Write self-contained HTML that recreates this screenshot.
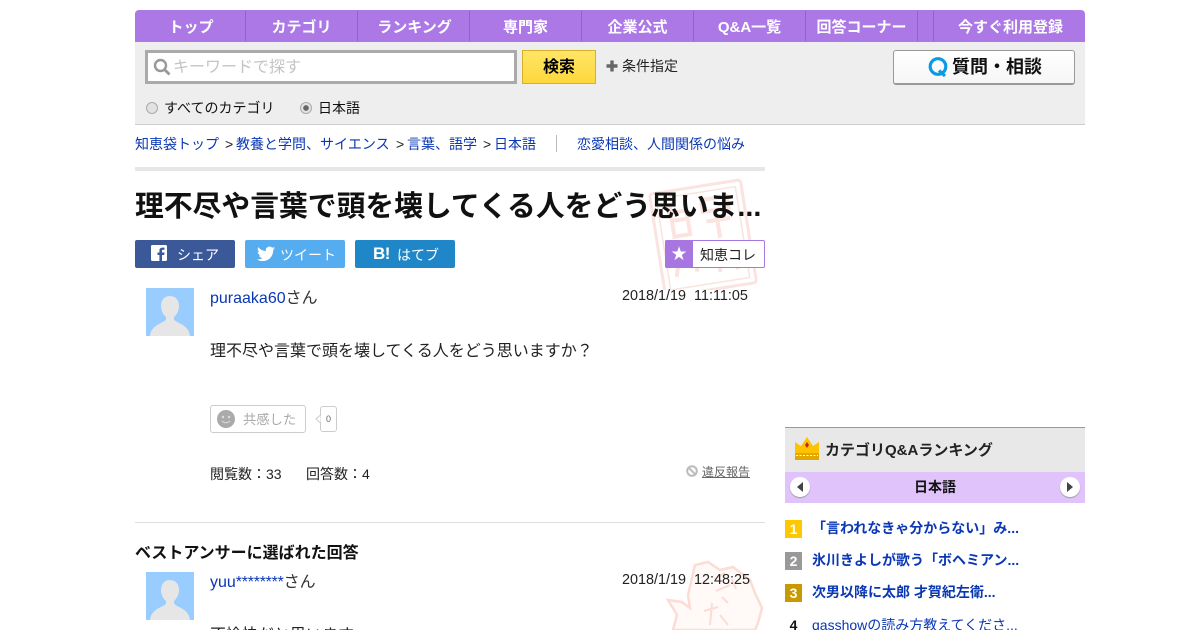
<!DOCTYPE html>
<html lang="ja"><head><meta charset="utf-8"><title>理不尽や言葉で頭を壊してくる人をどう思いますか？</title>
<style>
html,body{margin:0;padding:0;background:#fff;width:1200px;height:630px;overflow:hidden}
body{position:relative;font-family:"Liberation Sans","WenQuanYi Zen Hei","Noto Sans CJK JP",sans-serif;color:#111}
.a{position:absolute;white-space:nowrap}
a,.l{color:#0a37b4;text-decoration:none}
.nav{position:absolute;top:11px;height:32px;line-height:33px;text-align:center;color:#fff;font-weight:bold;font-size:15px}
.sep{position:absolute;top:11px;width:1px;height:30px;background:#8f63c9}
.btn{position:absolute;top:240px;width:100px;height:28px;border-radius:2px;color:#fff;font-size:14px;line-height:29px}
</style></head><body>
<div class="a" style="left:135px;top:10px;width:950px;height:32px;background:#ab78e6;border-radius:4px 4px 0 0"></div>
<div class="nav" style="left:136px;width:110px">トップ</div>
<div class="nav" style="left:246px;width:111px">カテゴリ</div>
<div class="nav" style="left:359px;width:111px">ランキング</div>
<div class="nav" style="left:470px;width:111px">専門家</div>
<div class="nav" style="left:582px;width:111px">企業公式</div>
<div class="nav" style="left:694px;width:111px">Q&amp;A一覧</div>
<div class="nav" style="left:806px;width:111px">回答コーナー</div>
<div class="nav" style="left:935px;width:151px">今すぐ利用登録</div>
<div class="sep" style="left:245px"></div><div class="sep" style="left:357px"></div><div class="sep" style="left:469px"></div><div class="sep" style="left:581px"></div><div class="sep" style="left:693px"></div><div class="sep" style="left:805px"></div><div class="sep" style="left:917px"></div><div class="sep" style="left:933px"></div>

<div class="a" style="left:135px;top:42px;width:950px;height:82px;background:#eee;border-bottom:1px solid #ccc"></div>
<div class="a" style="left:145px;top:50px;width:366px;height:28px;border:3px solid #aaa;background:#fff"></div>
<div class="a" style="left:173px;top:56px;font-size:16px;line-height:24px;color:#c4c4c4">キーワードで探す</div>
<svg class="a" style="left:153px;top:58px" width="18" height="18" viewBox="0 0 18 18"><circle cx="7.5" cy="7.5" r="5.5" fill="none" stroke="#999" stroke-width="2.4"/><path d="M11.5 11.5L16.5 16.5" stroke="#999" stroke-width="2.8"/></svg>
<div class="a" style="left:522px;top:50px;width:72px;height:32px;border:1px solid #d6b02c;background:linear-gradient(#ffe566,#fed73c);text-align:center;font-weight:bold;font-size:16px;line-height:33px;color:#000">検索</div>
<svg class="a" style="left:606px;top:60px" width="12" height="12"><path d="M6 0.5V11.500M0.5 6H11.500" stroke="#666" stroke-width="3.4"/></svg>
<div class="a" style="left:622px;top:56px;font-size:14px;line-height:20px;color:#222">条件指定</div>
<div class="a" style="left:893px;top:50px;width:180px;height:32px;border:1px solid #999;border-bottom:2px solid #999;border-radius:3px;background:linear-gradient(#fff,#f6f6f6)"></div>
<svg class="a" style="left:927px;top:56px" width="22" height="22" viewBox="0 0 22 22"><circle cx="11" cy="10.5" r="7.8" fill="none" stroke="#0a9be6" stroke-width="3.2"/><path d="M12 14.5L18 20" stroke="#0a9be6" stroke-width="3.2"/></svg>
<div class="a" style="left:952px;top:55px;font-size:18px;font-weight:bold;line-height:24px;color:#111">質問・相談</div>

<div class="a" style="left:146px;top:102px;width:10px;height:10px;border:1px solid #aaa;border-radius:50%;background:#e2e2e2"></div>
<div class="a" style="left:164px;top:98px;font-size:14px;line-height:21px">すべてのカテゴリ</div>
<div class="a" style="left:300px;top:102px;width:10px;height:10px;border:1px solid #aaa;border-radius:50%;background:radial-gradient(circle,#666 0,#666 2.4px,#e4e4e4 3.2px)"></div>
<div class="a" style="left:318px;top:98px;font-size:14px;line-height:21px">日本語</div>

<div class="a" style="left:135px;top:134px;font-size:14px;line-height:20px;color:#222"><a class="l">知恵袋トップ</a></div>
<div class="a" style="left:225px;top:134px;font-size:14px;line-height:20px;color:#222">&gt;</div>
<div class="a l" style="left:236px;top:134px;font-size:14px;line-height:20px">教養と学問、サイエンス</div>
<div class="a" style="left:396px;top:134px;font-size:14px;line-height:20px;color:#222">&gt;</div>
<div class="a l" style="left:407px;top:134px;font-size:14px;line-height:20px">言葉、語学</div>
<div class="a" style="left:483px;top:134px;font-size:14px;line-height:20px;color:#222">&gt;</div>
<div class="a l" style="left:494px;top:134px;font-size:14px;line-height:20px">日本語</div>
<div class="a" style="left:556px;top:135px;width:1px;height:17px;background:#bbb"></div>
<div class="a l" style="left:577px;top:134px;font-size:14px;line-height:20px">恋愛相談、人間関係の悩み</div>
<div class="a" style="left:135px;top:167px;width:630px;height:4px;background:#e6e6e6"></div>

<svg class="a" style="left:645px;top:178px" width="120" height="112" viewBox="0 0 120 112">
<g transform="rotate(-9 60 60)" fill="none" stroke="#fbe3df" stroke-width="3"><rect x="12" y="8" width="92" height="104" rx="3"/><rect x="18" y="14" width="80" height="92" stroke-width="1.5"/><path stroke-width="4" d="M26 30h22M30 22v32h16V22M30 38h16M62 22h26v12H62zM64 44h24M75 34v28M26 66h24l-3 26M34 66l-8 28M62 70h26M70 70v26M82 70l6 26"/></g></svg>

<div class="a" style="left:135px;top:186px;font-size:28.8px;font-weight:bold;line-height:42px;color:#111">理不尽や言葉で頭を壊してくる人をどう思いま...</div>

<div class="btn" style="left:135px;background:#3b5998"><svg class="a" style="left:16px;top:5px" width="16" height="16"><rect width="16" height="16" rx="1.5" fill="#fff"/><path d="M11 16V10h2.200l.4-2.500H11V6c0-.8.3-1.200 1.200-1.200h1.300V2.600h-2C9.300 2.600 8.400 3.800 8.400 5.700v1.800H6.500V10h1.900v6z" fill="#3b5998"/></svg><span class="a" style="left:42px;top:1px">シェア</span></div>
<div class="btn" style="left:245px;background:#55acee"><svg class="a" style="left:12px;top:6px" width="18" height="16" viewBox="0 0 24 20"><path fill="#fff" d="M24 2.400a10 10 0 0 1-2.800.8 5 5 0 0 0 2.200-2.700 10 10 0 0 1-3.100 1.200 4.900 4.900 0 0 0-8.400 4.500A14 14 0 0 1 1.700.9a4.900 4.900 0 0 0 1.500 6.600 4.900 4.900 0 0 1-2.200-.6c0 2.400 1.700 4.400 3.900 4.900a5 5 0 0 1-2.200.1 4.900 4.900 0 0 0 4.600 3.400A10 10 0 0 1 0 17.300 14 14 0 0 0 7.500 19.500c9.100 0 14.300-7.700 14-14.600A10 10 0 0 0 24 2.400z"/></svg><span class="a" style="left:35px;top:1px">ツイート</span></div>
<div class="btn" style="left:355px;background:#1f87c8"><span class="a" style="left:18px;top:-1px;font-weight:bold;font-size:17px;letter-spacing:-.5px;font-family:'Liberation Sans',sans-serif">B!</span><span class="a" style="left:42px;top:1px">はてブ</span></div>

<div class="a" style="left:665px;top:240px;width:98px;height:26px;border:1px solid #a876e0;border-radius:2px;background:#fff"></div>
<div class="a" style="left:665px;top:240px;width:28px;height:28px;background:#a876e0;border-radius:2px 0 0 2px;color:#fff;text-align:center;font-size:19px;line-height:28px;font-family:'DejaVu Sans',sans-serif">★</div>
<div class="a" style="left:700px;top:245px;font-size:14px;line-height:20px;color:#222">知恵コレ</div>

<svg class="a" style="left:146px;top:288px" width="48" height="48" viewBox="0 0 48 48"><rect width="48" height="48" fill="#99ccff"/><path d="M24 8c-6 0-9 4.500-9 10 0 5 2.500 9 5 11v2.500C18 35 5 36.500 4 48h40c-1-11.500-14-13-16-16.500V29c2.500-2 5-6 5-11 0-5.500-3-10-9-10z" fill="#e6e6e6"/></svg>
<div class="a" style="left:210px;top:288px;font-size:16px;line-height:21px;color:#333"><a class="l">puraaka60</a>さん</div>
<div class="a" style="left:622px;top:287px;font-size:14.4px;line-height:18px;color:#222">2018/1/19&nbsp;&nbsp;11:11:05</div>
<div class="a" style="left:210px;top:341px;font-size:16px;line-height:22px;color:#222">理不尽や言葉で頭を壊してくる人をどう思いますか？</div>

<div class="a" style="left:210px;top:405px;width:94px;height:26px;border:1px solid #ccc;border-radius:3px"></div>
<svg class="a" style="left:217px;top:410px" width="18" height="18"><circle cx="9" cy="9" r="9" fill="#aaa"/><circle cx="6" cy="7" r="1.200" fill="#ddd"/><circle cx="12" cy="7" r="1.200" fill="#ddd"/><path d="M5 11q4 3.500 8 0" stroke="#ddd" fill="none"/></svg>
<div class="a" style="left:243px;top:410px;font-size:13.3px;line-height:20px;color:#aaa">共感した</div>
<div class="a" style="left:320px;top:406px;width:15px;height:24px;border:1px solid #ccc;border-radius:3px;text-align:center;font-size:9px;line-height:25px;color:#666">0</div>
<svg class="a" style="left:315px;top:414px" width="6" height="10"><path d="M5.500 1L1 5l4.500 4" fill="#fff" stroke="#ccc"/></svg>

<div class="a" style="left:210px;top:464px;font-size:14px;line-height:20px;color:#222">閲覧数：33</div>
<div class="a" style="left:306px;top:464px;font-size:14px;line-height:20px;color:#222">回答数：4</div>
<svg class="a" style="left:686px;top:465px" width="12" height="12"><circle cx="6" cy="6" r="4.800" fill="none" stroke="#bbb" stroke-width="2"/><path d="M2.600 2.600L9.400 9.400" stroke="#bbb" stroke-width="2"/></svg>
<div class="a" style="left:702px;top:463px;font-size:12px;line-height:18px;color:#666;text-decoration:underline">違反報告</div>

<div class="a" style="left:135px;top:522px;width:630px;height:1px;background:#ddd"></div>
<div class="a" style="left:135px;top:543px;font-size:16px;font-weight:bold;line-height:22px;color:#111">ベストアンサーに選ばれた回答</div>
<svg class="a" style="left:660px;top:555px" width="105" height="75" viewBox="0 0 105 75"><path d="M13 75L17 60L8 45L22 47L30 53L28 40L35 10L48 7L60 15L73 12L90 25L95 38L102 53L98 68L95 75z" fill="#fff9f7" stroke="#fcdcd5" stroke-width="2.500"/><path d="M55 24l10-6M72 24l4 10M56 36l14-6M62 42l6 6M44 56l14-4M52 48l-2 22M60 60l8 10" stroke="#fcdcd5" stroke-width="2" fill="none"/></svg>
<svg class="a" style="left:146px;top:572px" width="48" height="48" viewBox="0 0 48 48"><rect width="48" height="48" fill="#99ccff"/><path d="M24 8c-6 0-9 4.500-9 10 0 5 2.500 9 5 11v2.500C18 35 5 36.500 4 48h40c-1-11.500-14-13-16-16.500V29c2.500-2 5-6 5-11 0-5.500-3-10-9-10z" fill="#e6e6e6"/></svg>
<div class="a" style="left:210px;top:572px;font-size:16px;line-height:21px;color:#333"><a class="l">yuu<span style="letter-spacing:-.25px">********</span></a>さん</div>
<div class="a" style="left:622px;top:571px;font-size:14.4px;line-height:18px;color:#222">2018/1/19&nbsp;&nbsp;12:48:25</div>
<div class="a" style="left:210px;top:625px;font-size:16px;line-height:22px;color:#222">不愉快だと思います。</div>

<div class="a" style="left:785px;top:427px;width:300px;height:45px;background:#e8e8e8;border-top:1px solid #999;box-sizing:border-box"></div>
<svg class="a" style="left:795px;top:436px" width="24" height="24" viewBox="0 0 24 24"><path d="M0 6l6 4 6-9 6 9 6-4v11H0z" fill="#fdc300"/><rect y="17" width="24" height="7" fill="#e3a700"/><path d="M1 19.500h22" stroke="#fff" stroke-dasharray="2 1.500"/><path d="M12 6l2 3-2 3-2-3z" fill="#c1272d"/></svg>
<div class="a" style="left:825px;top:441px;font-size:15px;font-weight:bold;line-height:20px;color:#222">カテゴリQ&amp;Aランキング</div>
<div class="a" style="left:785px;top:472px;width:300px;height:31px;background:#e0c3fb;text-align:center;font-size:14px;font-weight:bold;line-height:31px;color:#111">日本語</div>
<div class="a" style="left:790px;top:477px;width:20px;height:20px;border-radius:50%;background:#fff;box-shadow:0 1px 1px #999"></div>
<svg class="a" style="left:796px;top:482px" width="8" height="10"><path d="M7 0v10L1 5z" fill="#444"/></svg>
<div class="a" style="left:1060px;top:477px;width:20px;height:20px;border-radius:50%;background:#fff;box-shadow:0 1px 1px #999"></div>
<svg class="a" style="left:1066px;top:482px" width="8" height="10"><path d="M1 0v10l6-5z" fill="#444"/></svg>

<div class="a" style="left:785px;top:520px;width:17px;height:18px;background:#fdc800;color:#fff;font-weight:bold;font-size:14px;line-height:19px;text-align:center">1</div>
<div class="a l" style="left:812px;top:518px;font-size:14px;font-weight:bold;line-height:20px">「言われなきゃ分からない」み...</div>
<div class="a" style="left:785px;top:552px;width:17px;height:18px;background:#999;color:#fff;font-weight:bold;font-size:14px;line-height:19px;text-align:center">2</div>
<div class="a l" style="left:812px;top:550px;font-size:14px;font-weight:bold;line-height:20px">氷川きよしが歌う「ボヘミアン...</div>
<div class="a" style="left:785px;top:584px;width:17px;height:18px;background:#c99a00;color:#fff;font-weight:bold;font-size:14px;line-height:19px;text-align:center">3</div>
<div class="a l" style="left:812px;top:582px;font-size:14px;font-weight:bold;line-height:20px">次男以降に太郎 才賀紀左衛...</div>
<div class="a" style="left:785px;top:616px;width:17px;color:#111;font-weight:bold;font-size:14px;line-height:19px;text-align:center">4</div>
<div class="a l" style="left:812px;top:615px;font-size:14px;line-height:20px">qasshowの読み方教えてくださ...</div>
</body></html>
